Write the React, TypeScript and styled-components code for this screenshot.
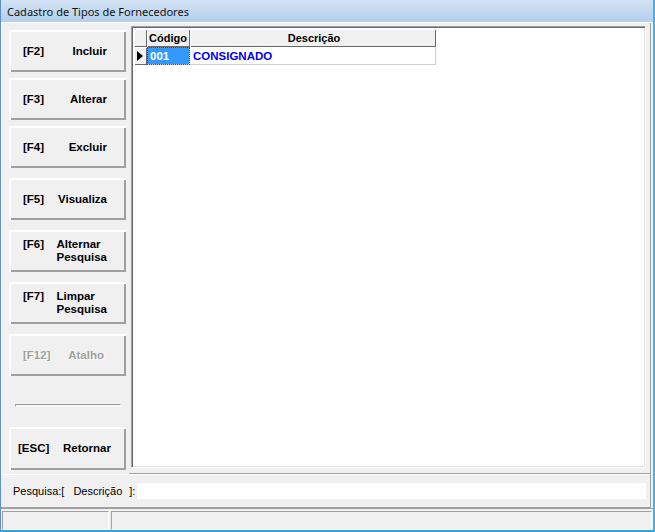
import styled, { createGlobalStyle } from "styled-components"

const GlobalStyle = createGlobalStyle`
  html, body {
    margin: 0;
    padding: 0;
    background: #f0f0f0;
  }
  body {
    font-family: "Liberation Sans", Arial, sans-serif;
    -webkit-font-smoothing: none;
  }
`

interface IAction {
    keyName: string,
    label: string[],
    gap?: number,
    padL?: number,
    padR?: number,
    disabled?: boolean
}

const actions: IAction[] = [
    { keyName: "[F2]", label: ["Incluir"] },
    { keyName: "[F3]", label: ["Alterar"], gap: 6 },
    { keyName: "[F4]", label: ["Excluir"], gap: 6 },
    { keyName: "[F5]", label: ["Visualiza"], gap: 10 },
    { keyName: "[F6]", label: ["Alternar", "Pesquisa"], gap: 10 },
    { keyName: "[F7]", label: ["Limpar", "Pesquisa"], gap: 10 },
    { keyName: "[F12]", label: ["Atalho"], gap: 10, padR: 22, disabled: true },
]

const Arrow = () => (
    <svg width="6" height="10" viewBox="0 0 6 10">
        <polygon points="0,0 6,5 0,10" fill="#000" />
    </svg>
)

export default function App() {
    return (
        <>
            <GlobalStyle />
            <Window>
                <TitleBar>Cadastro de Tipos de Fornecedores</TitleBar>
                <Client>
                    <Main>
                        <Sidebar>
                            {actions.map(a => (
                                <ActionButton
                                    key={a.keyName}
                                    $gap={a.gap ?? 0}
                                    $padL={a.padL ?? 14}
                                    $padR={a.padR ?? 19}
                                    $disabled={a.disabled}
                                >
                                    <ButtonRow>
                                        <KeyName>{a.keyName}</KeyName>
                                        <Label>
                                            {a.label.map(l => <div key={l}>{l}</div>)}
                                        </Label>
                                    </ButtonRow>
                                </ActionButton>
                            ))}
                            <Separator />
                            <ActionButton $gap={20} $padL={9} $padR={15} $tall>
                                <ButtonRow>
                                    <KeyName>[ESC]</KeyName>
                                    <Label>Retornar</Label>
                                </ButtonRow>
                            </ActionButton>
                        </Sidebar>
                        <GridPanel>
                            <Grid>
                                <Table>
                                    <HeadCell />
                                    <HeadCell>Código</HeadCell>
                                    <HeadCell $center>Descrição</HeadCell>
                                    <IndicatorCell><Arrow /></IndicatorCell>
                                    <DataCell $selected>001</DataCell>
                                    <DataCell>CONSIGNADO</DataCell>
                                </Table>
                            </Grid>
                        </GridPanel>
                    </Main>
                    <SearchBar>
                        <SearchLabel>Pesquisa:[</SearchLabel>
                        <SearchField>Descrição</SearchField>
                        <SearchLabel>]:</SearchLabel>
                        <SearchInput />
                    </SearchBar>
                    <StatusBar>
                        <StatusPanel $width={107} />
                        <StatusPanel />
                    </StatusBar>
                </Client>
            </Window>
        </>
    )
}


// Window frame
const Window = styled.div`
    width: 655px;
    height: 532px;
    box-sizing: border-box;
    display: flex;
    flex-direction: column;
    border-left: 1px solid #5d8fc8;
    border-right: 2px solid #45b2e2;
    border-bottom: 2px solid #3a9fd6;
    background: #f0f0f0;
    overflow: hidden;
`;

const TitleBar = styled.div`
    height: 22px;
    flex: none;
    display: flex;
    align-items: center;
    padding-left: 6px;
    background: linear-gradient(#d3e3f5, #b4cfeb);
    font-family: "Noto Sans", "Liberation Sans", sans-serif;
    font-size: 11px;
    color: #111;
`;

const Client = styled.div`
    flex: 1;
    display: flex;
    flex-direction: column;
    border-top: 1px solid #fff;
`;

const Main = styled.div`
    height: 451px;
    display: flex;
`;

// Left button column
const Sidebar = styled.div`
    width: 128px;
    flex: none;
    display: flex;
    flex-direction: column;
    padding: 7px 0 0 7px;
    box-sizing: border-box;
    border-left: 1px solid #fff;
`;

const ActionButton = styled.div<{ $gap: number, $padL: number, $padR: number, $disabled?: boolean, $tall?: boolean }>`
    width: 117px;
    height: ${p => p.$tall ? 43 : 42}px;
    margin-top: ${p => p.$gap}px;
    box-sizing: border-box;
    display: flex;
    align-items: center;
    padding: 0 ${p => p.$padR}px 0 ${p => p.$padL}px;
    background: #f0f0f0;
    box-shadow: inset 2px 2px #fff, inset -2px -2px #a0a0a0;
    font: bold 11.5px "Liberation Sans", Arial, sans-serif;
    color: ${p => p.$disabled ? "#a0a0a0" : "#000"};
    text-shadow: ${p => p.$disabled ? "1px 1px #fff" : "none"};
`;

const ButtonRow = styled.div`
    flex: 1;
    display: flex;
    align-items: baseline;
    line-height: 13px;
`;

const KeyName = styled.span`
    white-space: nowrap;
`;

const Label = styled.div`
    margin-left: auto;
    text-align: left;
`;

const Separator = styled.div`
    width: 104px;
    height: 1px;
    margin: 28px 0 0 6px;
    border-top: 1px solid #a0a0a0;
    border-left: 1px solid #a0a0a0;
    border-bottom: 1px solid #fff;
    border-right: 1px solid #fff;
`;

// Grid
const GridPanel = styled.div`
    flex: 1;
    display: flex;
    margin-right: 2px;
    padding: 3px 4px 5px 2px;
    border-right: 1px solid #a0a0a0;
    border-bottom: 1px solid #a0a0a0;
`;

const Grid = styled.div`
    flex: 1;
    background: #fff;
    border: 1px solid;
    border-color: #a0a0a0 #fff #fff #a0a0a0;
    box-shadow: inset 1px 1px #696969, inset -1px -1px #e3e3e3;
    padding: 2px 0 0 2px;
`;

const Table = styled.div`
    display: grid;
    grid-template-columns: 13px 43px 246px;
    grid-auto-rows: 18px;
    width: max-content;
`;

const HeadCell = styled.div<{ $center?: boolean }>`
    background: #f0f0f0;
    box-shadow: inset 1px 1px #fff, inset -1px -1px #696969;
    display: flex;
    align-items: center;
    justify-content: ${p => p.$center ? "center" : "flex-start"};
    padding-left: 2px;
    font: bold 11px "Liberation Sans", Arial, sans-serif;
    color: #000;
`;

const IndicatorCell = styled(HeadCell)`
    padding-left: 3px;
`;

const DataCell = styled.div<{ $selected?: boolean }>`
    display: flex;
    align-items: center;
    padding-left: 3px;
    font: bold 11.5px "Liberation Sans", Arial, sans-serif;
    color: ${p => p.$selected ? "#fff" : "#0000f0"};
    background: ${p => p.$selected ? "#3399ff" : "#fff"};
    box-shadow: inset -1px -1px #d0d0d0;
    outline: ${p => p.$selected ? "1px dotted #7a3d00" : "none"};
    outline-offset: -1px;
`;

// Search bar
const SearchBar = styled.div`
    height: 34px;
    box-sizing: border-box;
    flex: none;
    display: flex;
    align-items: center;
    margin-right: 2px;
    padding: 0 4px 0 12px;
    border-top: 1px solid #fff;
    border-right: 1px solid #a0a0a0;
    border-bottom: 1px solid #a0a0a0;
    font: 11px "Liberation Sans", Arial, sans-serif;
    color: #000;
`;

const SearchLabel = styled.span`
    white-space: nowrap;
`;

const SearchField = styled.span`
    margin: 0 7px 0 9px;
`;

const SearchInput = styled.div`
    flex: 1;
    height: 16px;
    margin-left: 2px;
    background: #fff;
`;

// Status bar
const StatusBar = styled.div`
    flex: 1;
    display: flex;
    gap: 2px;
    padding: 2px 1px 0 1px;
    border-top: 1px solid #a0a0a0;
`;

const StatusPanel = styled.div<{ $width?: number }>`
    ${p => p.$width ? `width: ${p.$width}px;` : "flex: 1;"}
    box-sizing: border-box;
    border: 1px solid;
    border-color: #a0a0a0 #fff #fff #a0a0a0;
`;
